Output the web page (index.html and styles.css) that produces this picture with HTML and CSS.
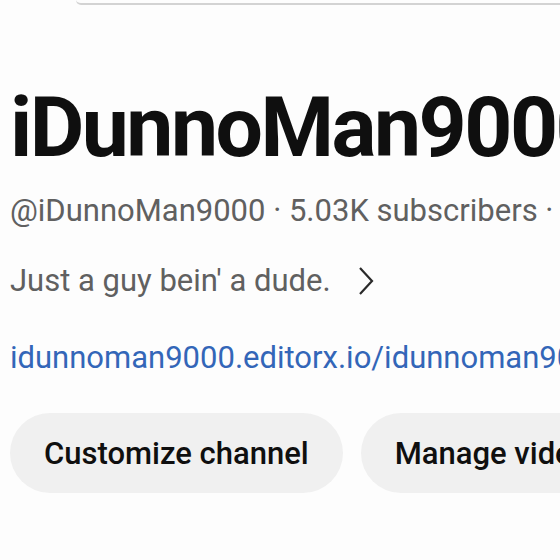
FILE: index.html
```html
<!DOCTYPE html>
<html lang="en">
<head>
    <meta charset="UTF-8">
    <meta name="viewport" content="width=device-width, initial-scale=1.0">
    <title>iDunnoMan9000</title>
    <link rel="stylesheet" href="styles.css">
</head>
<body>

    <div class="banner-edge"></div>

    <div class="channel-info">
        <h1 class="channel-name">iDunnoMan9000</h1>

        <div class="channel-meta">@iDunnoMan9000 · 5.03K subscribers · 42 videos</div>

        <div class="channel-desc">
            <span>Just a guy bein' a dude.</span>
            <svg class="chevron" viewBox="0 0 18 30" width="18" height="30">
                <polyline points="3,2 15,15 3,28" fill="none" stroke="currentColor" stroke-width="2.2"/>
            </svg>
        </div>

        <a class="channel-link" href="#">idunnoman9000.editorx.io/idunnoman9000</a>

        <div class="actions">
            <button class="pill">Customize channel</button>
            <button class="pill">Manage videos</button>
        </div>
    </div>

</body>
</html>
```

FILE: styles.css
```css
body {
    font-family: Roboto, Arial, sans-serif;
    margin: 0;
    padding: 0;
    background-color: #fdfdfd;
    color: #0f0f0f;
    overflow: hidden;
    width: 560px;
    height: 560px;
}

.banner-edge {
    height: 3px;
    margin-left: 76px;
    border-bottom: 2px solid #d3d3d3;
    border-bottom-left-radius: 14px;
}

.channel-info {
    padding-left: 10px;
    white-space: nowrap;
}

.channel-name {
    font-size: 84px;
    font-weight: 700;
    line-height: 100px;
    margin: 73px 0 0;
    letter-spacing: -2.5px;
}

.channel-meta {
    font-size: 31px;
    line-height: 40px;
    color: #606060;
    margin-top: 13px;
}

.channel-desc {
    font-size: 31px;
    line-height: 40px;
    color: #606060;
    margin-top: 30px;
    display: flex;
    align-items: center;
    gap: 26px;
}

.chevron {
    color: #2a2a2a;
}

.channel-link {
    display: block;
    font-size: 31px;
    line-height: 40px;
    color: #3366b8;
    text-decoration: none;
    margin-top: 37px;
}

.actions {
    display: flex;
    gap: 18px;
    margin-top: 35px;
}

.pill {
    font-family: Roboto, Arial, sans-serif;
    font-size: 31px;
    font-weight: 500;
    color: #0f0f0f;
    background-color: #f0f0f0;
    border: none;
    border-radius: 40px;
    height: 80px;
    padding: 0 34px;
    flex-shrink: 0;
}
```
